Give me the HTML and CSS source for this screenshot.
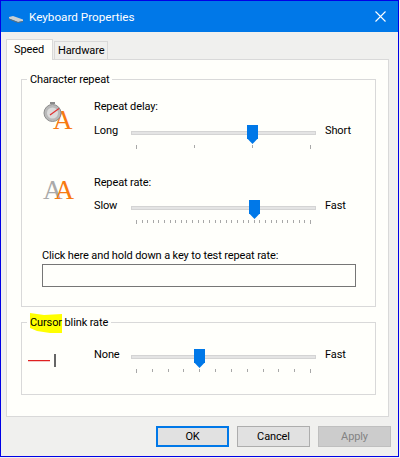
FILE: index.html
```html
<!DOCTYPE html>
<html lang="en">

<head>
    <meta charset="UTF-8">
    <title>Keyboard Properties</title>
    <link rel="stylesheet" href="styles.css">
</head>

<body>
    <div class="window">
        <div class="titlebar">
            <svg class="kbIcon" width="14" height="7" viewBox="0 0 14 7">
                <path d="M0 1 L4 0 L14 3.5 L14 5 L9 6 L0 2.5 Z" fill="#c9cfd2" />
                <path d="M0 2.5 L9 6 L14 5 L14 6 L9 7 L0 3.5 Z" fill="#5f6f78" />
            </svg>
            <span class="titleText">Keyboard Properties</span>
            <svg class="closeIcon" width="11" height="11" viewBox="0 0 11 11">
                <path d="M0.5 0.5 L10.5 10.5 M10.5 0.5 L0.5 10.5" stroke="#fff" stroke-width="1.1" fill="none" />
            </svg>
        </div>
        <div class="content">
            <div class="tabs">
                <div class="tab active">Speed</div>
                <div class="tab">Hardware</div>
            </div>
            <div class="panel">
                <div class="group groupRepeat">
                    <div class="legend">Character repeat</div>
                    <div class="row rowDelay">
                        <div class="iconBox">
                            <span class="letterA single">A</span>
                            <svg class="watch" width="19" height="20" viewBox="0 0 19 20">
                                <rect x="7" y="0" width="5" height="2" fill="#8a8a8a" />
                                <circle cx="9.5" cy="11" r="8.5" fill="#b9b9b9" stroke="#8c8c8c" />
                                <circle cx="9.5" cy="11" r="5.5" fill="#dcdcdc" />
                                <path d="M7 13 L16 6.5" stroke="#e03030" stroke-width="1.2" />
                            </svg>
                        </div>
                        <div class="sliderCol">
                            <div class="label">Repeat delay:</div>
                            <div class="sliderRow">
                                <span class="endLeft">Long</span>
                                <div class="slider">
                                    <div class="track"></div>
                                    <div class="thumb" style="left: 116px"></div>
                                    <div class="ticks">
                                        <i></i><i></i><i></i><i></i>
                                    </div>
                                </div>
                                <span class="endRight">Short</span>
                            </div>
                        </div>
                    </div>
                    <div class="row rowRate">
                        <div class="iconBox">
                            <span class="letterA double">A<span class="orange">A</span></span>
                        </div>
                        <div class="sliderCol">
                            <div class="label labelRate">Repeat rate:</div>
                            <div class="sliderRow">
                                <span class="endLeft">Slow</span>
                                <div class="slider">
                                    <div class="track"></div>
                                    <div class="thumb" style="left: 118px"></div>
                                    <div class="ticks">
                                        <i></i><i></i><i></i><i></i><i></i><i></i><i></i><i></i>
                                        <i></i><i></i><i></i><i></i><i></i><i></i><i></i><i></i>
                                        <i></i><i></i><i></i><i></i><i></i><i></i><i></i><i></i>
                                        <i></i><i></i><i></i><i></i><i></i><i></i><i></i><i></i>
                                    </div>
                                </div>
                                <span class="endRight">Fast</span>
                            </div>
                        </div>
                    </div>
                    <div class="testArea">
                        <div class="testLabel">Click here and hold down a key to test repeat rate:</div>
                        <div class="testBox"></div>
                    </div>
                </div>
                <div class="group groupBlink">
                    <div class="legend">
                        <svg class="marker" width="33" height="21" viewBox="0 0 33 21">
                            <path d="M0 0 L14 2 L32 1 L32 20 L20 20 L7 18 L0 15 Z" fill="#ffff00" />
                        </svg>
                        <span class="legendText">Cursor blink rate</span>
                    </div>
                    <div class="row rowBlink">
                        <div class="blinkIcon">
                            <span class="blinkLine"></span>
                            <span class="blinkCaret"></span>
                        </div>
                        <div class="sliderRow">
                            <span class="endLeft">None</span>
                            <div class="slider">
                                <div class="track"></div>
                                <div class="thumb" style="left: 63px"></div>
                                <div class="ticks">
                                    <i></i><i></i><i></i><i></i><i></i><i></i>
                                    <i></i><i></i><i></i><i></i><i></i><i></i>
                                </div>
                            </div>
                            <span class="endRight">Fast</span>
                        </div>
                    </div>
                </div>
            </div>
            <div class="buttons">
                <button class="btn default">OK</button>
                <button class="btn">Cancel</button>
                <button class="btn disabled">Apply</button>
            </div>
        </div>
    </div>
</body>

</html>
```

FILE: styles.css
```css
body {
    margin: 0;
    padding: 0;
    width: 400px;
    height: 458px;
    overflow: hidden;
    background-color: #f0f0ee;
    font-family: Roboto, sans-serif;
    font-size: 11px;
    letter-spacing: -0.12px;
    color: #000;
}

.window {
    width: 399px;
    height: 457px;
    box-sizing: border-box;
    border: 1px solid #0000e6;
    background-color: #f0f0ee;
    display: flex;
    flex-direction: column;
}

.titlebar {
    height: 31px;
    flex: none;
    background-color: #0078e8;
    display: flex;
    align-items: center;
    padding: 0 12px 0 8px;
    color: #fff;
}

.kbIcon {
    margin-right: 6px;
    margin-top: 5px;
}

.titleText {
    flex: 1;
    font-size: 11.7px;
    letter-spacing: 0;
}

.content {
    flex: 1;
    padding: 7px 7px 0 5px;
}

.tabs {
    display: flex;
    align-items: flex-end;
    height: 20px;
}

.tab {
    height: 18px;
    line-height: 18px;
    box-sizing: border-box;
    padding: 0 3px;
    width: 54px;
    background-color: #f0f0ee;
    border: 1px solid #d9d9d9;
    border-bottom: none;
    margin-left: 1px;
}

.tab.active {
    width: 47px;
    height: 21px;
    line-height: 19px;
    margin-left: 0;
    padding: 0 7px;
    background-color: #fffffb;
    position: relative;
    top: 1px;
    z-index: 1;
}

.panel {
    width: 383px;
    height: 358px;
    box-sizing: border-box;
    background-color: #fffffb;
    border: 1px solid #d9d9d9;
    padding: 19px 12px 0 14px;
}

.group {
    position: relative;
    width: 355px;
    box-sizing: border-box;
    border: 1px solid #d9d9d9;
}

.groupRepeat {
    height: 228px;
    padding: 0 20px;
    margin-bottom: 15px;
}

.groupBlink {
    height: 73px;
}

.legend {
    position: absolute;
    top: -9px;
    left: 5px;
    padding: 0 3px;
    height: 17px;
    line-height: 17px;
    background-color: #fffffb;
}

.legendText {
    position: relative;
}

.marker {
    position: absolute;
    left: 3px;
    top: -1px;
}

.row {
    display: flex;
}

.rowDelay {
    padding-top: 18px;
    height: 76px;
}

.rowRate {
    height: 73px;
}

.iconBox {
    position: relative;
    width: 52px;
    flex: none;
}

.watch {
    position: absolute;
    left: 1px;
    top: 4px;
}

.letterA {
    position: absolute;
    font-family: "Liberation Serif", serif;
    font-size: 27px;
    line-height: 27px;
    color: #f87a10;
}

.letterA.single {
    left: 11px;
    top: 9px;
}

.letterA.double {
    left: 1px;
    top: 3px;
    color: #aaa;
    letter-spacing: -8px;
}

.orange {
    color: #f87a10;
}

.sliderCol {
    flex: 1;
}

.label {
    height: 27px;
    line-height: 17px;
}

.labelRate {
    height: 26px;
}

.sliderRow {
    display: flex;
    align-items: flex-start;
    line-height: 17px;
}

.endLeft {
    width: 37px;
    flex: none;
    margin-top: -3px;
}

.endRight {
    margin-left: 9px;
    margin-top: -3px;
}

.slider {
    position: relative;
    width: 185px;
    height: 28px;
    flex: none;
}

.track {
    position: absolute;
    left: 0;
    right: 0;
    top: 6px;
    height: 4px;
    box-sizing: border-box;
    background-color: #e4e4e4;
    border: 1px solid #d4d4d4;
}

.thumb {
    position: absolute;
    top: 0;
    width: 11px;
    height: 19px;
    background-color: #0078e8;
    clip-path: polygon(0 0, 100% 0, 100% 70%, 50% 100%, 0 70%);
}

.ticks {
    position: absolute;
    left: 5px;
    right: 5px;
    top: 20px;
    display: flex;
    justify-content: space-between;
}

.ticks i {
    display: block;
    width: 1px;
    height: 3px;
    background-color: #a8a8a8;
}

.ticks i:first-child,
.ticks i:last-child {
    height: 4px;
}

.testLabel {
    height: 17px;
    line-height: 17px;
}

.testBox {
    width: 314px;
    height: 23px;
    box-sizing: border-box;
    border: 1px solid #767676;
    background-color: #fffffb;
}

.rowBlink {
    padding-top: 26px;
}

.blinkIcon {
    width: 72px;
    flex: none;
    display: flex;
    align-items: center;
    height: 23px;
    padding-left: 6px;
    box-sizing: border-box;
}

.blinkLine {
    width: 22px;
    height: 1px;
    background-color: #e02020;
    box-shadow: 0 1px #f3c8c8;
    margin-right: 4px;
}

.blinkCaret {
    width: 2px;
    height: 13px;
    background-color: #666;
}

.buttons {
    display: flex;
    justify-content: flex-end;
    gap: 8px;
    padding-top: 9px;
}

.btn {
    width: 73px;
    height: 21px;
    box-sizing: border-box;
    padding: 0;
    font-family: Roboto, sans-serif;
    font-size: 11px;
    letter-spacing: -0.12px;
    background-color: #e1e1e1;
    border: 1px solid #adadad;
    color: #000;
}

.btn.default {
    border: 2px solid #0078e8;
}

.btn.disabled {
    background-color: #cccccc;
    border-color: #bfbfbf;
    color: #838383;
}
```
